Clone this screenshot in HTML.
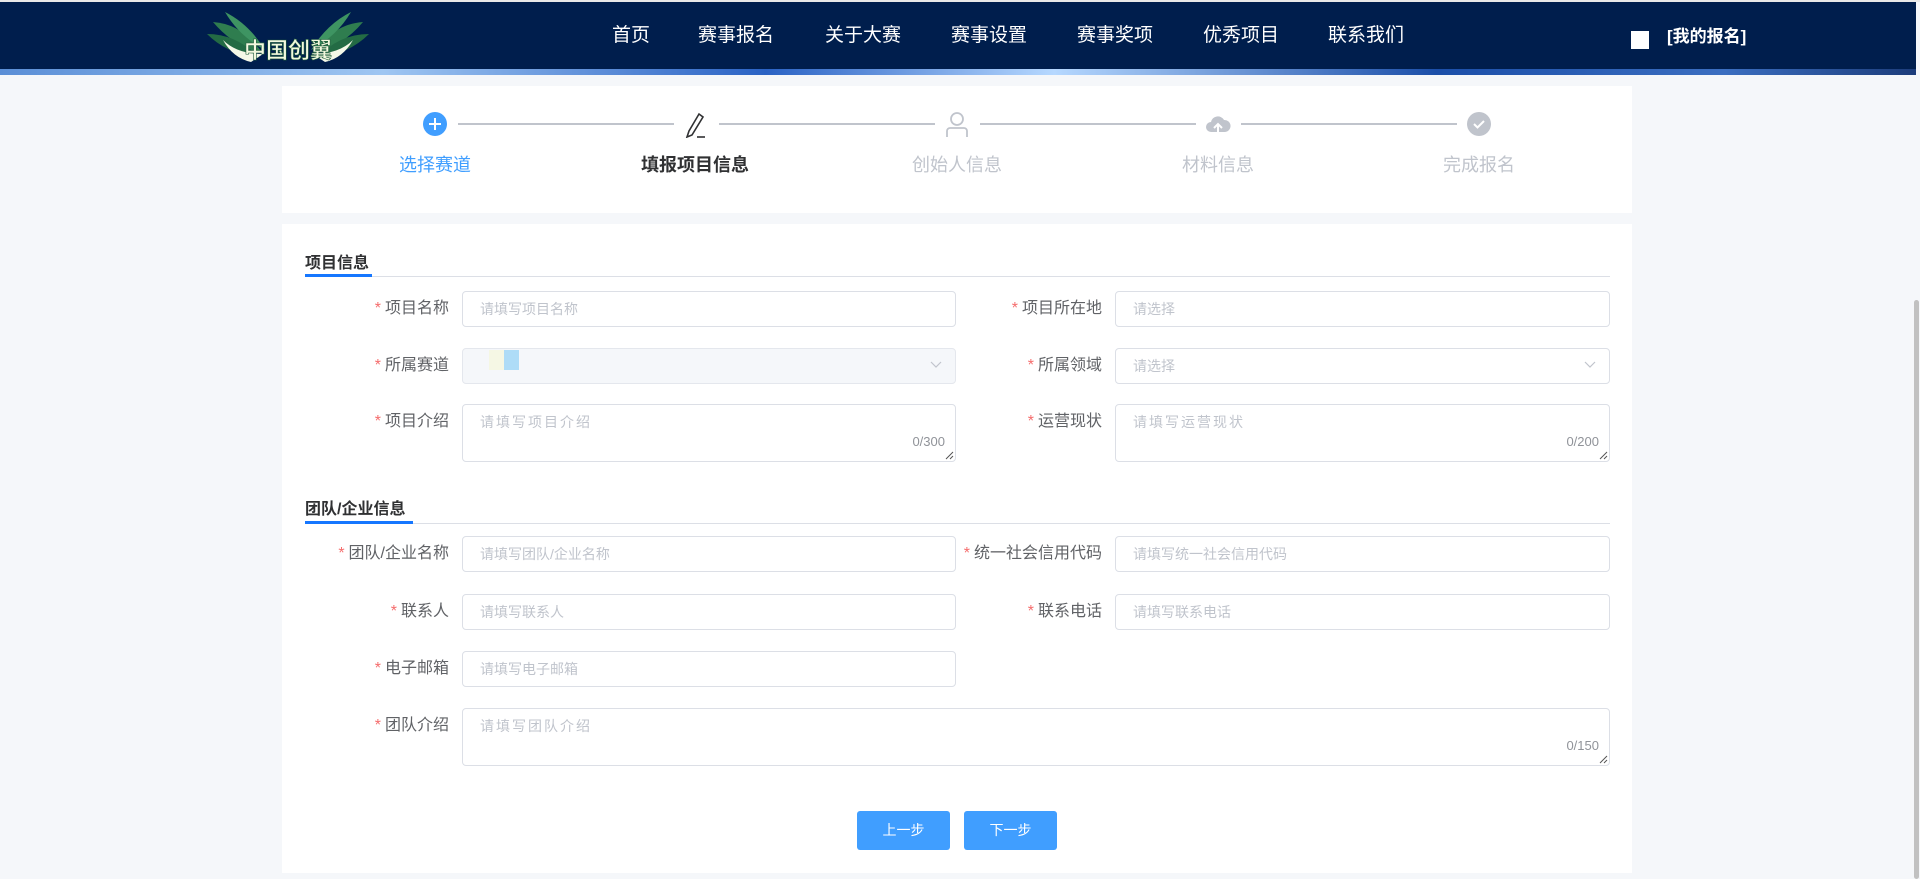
<!DOCTYPE html>
<html><head><meta charset="utf-8"><style>
*{margin:0;padding:0;box-sizing:border-box}
body{width:1920px;height:879px;overflow:hidden;background:#f5f7fa;font-family:"Liberation Sans","Noto Sans CJK SC",sans-serif;position:relative}
.abs{position:absolute}
.hdr{left:0;top:2px;width:1916px;height:68px;background:#001e4d}
.strip{left:0;top:69px;width:1916px;height:6px;background:linear-gradient(90deg,#5a8ed6,#9fc6f2 20%,#2a62c4 40%,#b6d8ff 55%,#1b4ea8 75%,#3b6ec0 90%,#1c3c7a)}
.topline{left:0;top:0;width:1920px;height:2px;background:#e8e8e8}
.nav{top:22px;color:#fff;font-size:19px;line-height:28px;white-space:nowrap}
.card{background:#fff}
.step{font-size:18px;top:151px;width:200px;text-align:center}
.ln{height:2px;background:#c0c4cc;top:123px}
.lbl{font-size:16px;color:#606266;text-align:right;width:200px;line-height:36px}
.lbl b{color:#f56c6c;font-weight:normal;margin-right:4px}
.inp{border:1px solid #dcdfe6;border-radius:4px;background:#fff;font-size:14px;color:#c0c4cc;padding-left:17px;line-height:34px}
.cnt{position:absolute;right:10px;bottom:12px;font-size:13px;color:#909399;line-height:14px}
.rs{position:absolute;right:1px;bottom:1px}
.sec{font-size:16px;font-weight:bold;color:#303133}
.btn{background:#409eff;color:#fff;font-size:14px;text-align:center;line-height:39px;border-radius:3px;width:93px;height:39px;top:811px}
</style></head><body>
<div class="abs topline"></div>
<div class="abs hdr"></div>
<div class="abs strip"></div>
<svg class="abs" style="left:203px;top:10px" width="170" height="56" viewBox="0 0 170 56">
<g fill="#2f7d4f"><path d="M10 12 Q40 14 60 44 Q30 36 10 12Z"/><path d="M4 24 Q34 24 56 48 Q24 44 4 24Z" fill="#236b44"/><path d="M22 2 Q46 14 62 40 Q36 26 22 2Z" fill="#3e9462"/>
<path d="M160 12 Q130 14 110 44 Q140 36 160 12Z"/><path d="M166 24 Q136 24 114 48 Q146 44 166 24Z" fill="#236b44"/><path d="M148 2 Q124 14 108 40 Q134 26 148 2Z" fill="#3e9462"/></g>
<path d="M20 30 Q34 44 60 44 L48 52 Q30 48 20 30Z" fill="#f4f8e8"/><path d="M150 30 Q136 44 110 44 L122 52 Q140 48 150 30Z" fill="#f4f8e8"/>
<text x="85" y="48" text-anchor="middle" font-size="22" font-weight="bold" fill="#f3f8df" stroke="#1c5a3a" stroke-width="0.6" font-family="Liberation Sans,Noto Sans CJK SC,sans-serif">中国创翼</text>
</svg>
<div class="abs nav" style="left:612px">首页</div>
<div class="abs nav" style="left:698px">赛事报名</div>
<div class="abs nav" style="left:825px">关于大赛</div>
<div class="abs nav" style="left:951px">赛事设置</div>
<div class="abs nav" style="left:1077px">赛事奖项</div>
<div class="abs nav" style="left:1203px">优秀项目</div>
<div class="abs nav" style="left:1328px">联系我们</div>
<div class="abs" style="left:1631px;top:31px;width:18px;height:18px;background:#fff"></div>
<div class="abs" style="left:1667px;top:24px;color:#fff;font-size:17px;font-weight:bold;line-height:26px">[我的报名]</div>

<div class="abs card" style="left:282px;top:86px;width:1350px;height:127px"></div>
<svg class="abs" style="left:423px;top:112px" width="24" height="24"><circle cx="12" cy="12" r="12" fill="#409eff"/><path d="M12 6v12M6 12h12" stroke="#fff" stroke-width="2"/></svg>
<div class="abs ln" style="left:458px;width:216px"></div>
<svg class="abs" style="left:683px;top:110px" width="26" height="28"><path d="M6 21 L4 27 L9 25 L20 7 L16 4Z" fill="none" stroke="#303133" stroke-width="1.6"/><path d="M14 27h8" stroke="#303133" stroke-width="1.6"/></svg>
<div class="abs ln" style="left:719px;width:216px"></div>
<svg class="abs" style="left:945px;top:111px" width="24" height="26"><circle cx="12" cy="8" r="6" fill="none" stroke="#c0c4cc" stroke-width="1.8"/><path d="M2 26v-6a3 3 0 0 1 3-3h14a3 3 0 0 1 3 3v6" fill="none" stroke="#c0c4cc" stroke-width="1.8"/></svg>
<div class="abs ln" style="left:980px;width:216px"></div>
<svg class="abs" style="left:1205px;top:112px" width="26" height="24"><path d="M6 20a5 5 0 0 1 0-10 7 7 0 0 1 13-2 6 6 0 0 1 1 12Z" fill="#c0c4cc"/><path d="M13 22v-9M9 16l4-4 4 4" stroke="#fff" stroke-width="2" fill="none"/></svg>
<div class="abs ln" style="left:1241px;width:216px"></div>
<svg class="abs" style="left:1467px;top:112px" width="24" height="24"><circle cx="12" cy="12" r="12" fill="#c0c4cc"/><path d="M7 12l3.5 3.5L17 9" stroke="#fff" stroke-width="2" fill="none"/></svg>
<div class="abs step" style="left:335px;color:#409eff">选择赛道</div>
<div class="abs step" style="left:595px;color:#303133;font-weight:bold">填报项目信息</div>
<div class="abs step" style="left:857px;color:#c0c4cc">创始人信息</div>
<div class="abs step" style="left:1118px;color:#c0c4cc">材料信息</div>
<div class="abs step" style="left:1379px;color:#c0c4cc">完成报名</div>

<div class="abs card" style="left:282px;top:224px;width:1350px;height:649px"></div>
<div class="abs sec" style="left:305px;top:249px">项目信息</div>
<div class="abs" style="left:305px;top:276px;width:1305px;height:1px;background:#dcdfe6"></div>
<div class="abs" style="left:305px;top:274px;width:67px;height:3px;background:#1677ff"></div>

<div class="abs lbl" style="left:249px;top:291px"><b>*</b>项目名称</div>
<div class="abs inp" style="left:462px;top:291px;width:494px;height:36px">请填写项目名称</div>
<div class="abs lbl" style="left:902px;top:291px"><b>*</b>项目所在地</div>
<div class="abs inp" style="left:1115px;top:291px;width:495px;height:36px">请选择</div>

<div class="abs lbl" style="left:249px;top:348px"><b>*</b>所属赛道</div>
<div class="abs inp" style="left:462px;top:348px;width:494px;height:36px;background:#f5f7fa;border-color:#e4e7ed"></div>
<div class="abs" style="left:489px;top:350px;width:15px;height:20px;background:#f5f7e4"></div>
<div class="abs" style="left:504px;top:350px;width:15px;height:20px;background:#aedcf7"></div>
<svg class="abs" style="left:930px;top:361px" width="12" height="8"><path d="M1 1l5 5 5-5" stroke="#c0c4cc" fill="none" stroke-width="1.2"/></svg>
<div class="abs lbl" style="left:902px;top:348px"><b>*</b>所属领域</div>
<div class="abs inp" style="left:1115px;top:348px;width:495px;height:36px">请选择</div>
<svg class="abs" style="left:1584px;top:361px" width="12" height="8"><path d="M1 1l5 5 5-5" stroke="#c0c4cc" fill="none" stroke-width="1.2"/></svg>

<div class="abs lbl" style="left:249px;top:404px"><b>*</b>项目介绍</div>
<div class="abs inp" style="left:462px;top:404px;width:494px;height:58px;letter-spacing:2px">请填写项目介绍<span class="cnt" style="letter-spacing:0">0/300</span><svg class="rs" width="10" height="10"><path d="M9 2L2 9M9 6L6 9" stroke="#555" stroke-width="1"/></svg></div>
<div class="abs lbl" style="left:902px;top:404px"><b>*</b>运营现状</div>
<div class="abs inp" style="left:1115px;top:404px;width:495px;height:58px;letter-spacing:2px">请填写运营现状<span class="cnt" style="letter-spacing:0">0/200</span><svg class="rs" width="10" height="10"><path d="M9 2L2 9M9 6L6 9" stroke="#555" stroke-width="1"/></svg></div>

<div class="abs sec" style="left:305px;top:495px">团队/企业信息</div>
<div class="abs" style="left:305px;top:523px;width:1305px;height:1px;background:#dcdfe6"></div>
<div class="abs" style="left:305px;top:521px;width:108px;height:3px;background:#1677ff"></div>

<div class="abs lbl" style="left:249px;top:536px"><b>*</b>团队/企业名称</div>
<div class="abs inp" style="left:462px;top:536px;width:494px;height:36px">请填写团队/企业名称</div>
<div class="abs lbl" style="left:902px;top:536px"><b>*</b>统一社会信用代码</div>
<div class="abs inp" style="left:1115px;top:536px;width:495px;height:36px">请填写统一社会信用代码</div>

<div class="abs lbl" style="left:249px;top:594px"><b>*</b>联系人</div>
<div class="abs inp" style="left:462px;top:594px;width:494px;height:36px">请填写联系人</div>
<div class="abs lbl" style="left:902px;top:594px"><b>*</b>联系电话</div>
<div class="abs inp" style="left:1115px;top:594px;width:495px;height:36px">请填写联系电话</div>

<div class="abs lbl" style="left:249px;top:651px"><b>*</b>电子邮箱</div>
<div class="abs inp" style="left:462px;top:651px;width:494px;height:36px">请填写电子邮箱</div>

<div class="abs lbl" style="left:249px;top:708px"><b>*</b>团队介绍</div>
<div class="abs inp" style="left:462px;top:708px;width:1148px;height:58px;letter-spacing:2px">请填写团队介绍<span class="cnt" style="letter-spacing:0">0/150</span><svg class="rs" width="10" height="10"><path d="M9 2L2 9M9 6L6 9" stroke="#555" stroke-width="1"/></svg></div>

<div class="abs btn" style="left:857px">上一步</div>
<div class="abs btn" style="left:964px">下一步</div>
<div class="abs" style="left:1914px;top:300px;width:5px;height:579px;background:#c1c1c1;border-radius:3px"></div>
</body></html>
